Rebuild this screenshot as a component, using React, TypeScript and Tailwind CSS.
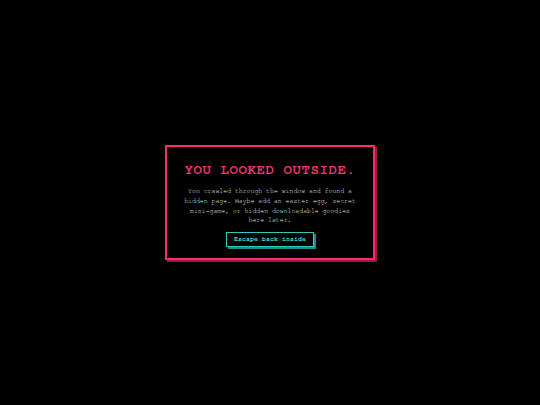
export default function App() {
  return (
    <div className="flex h-screen w-full items-center justify-center bg-black font-['FreeMono','Liberation_Mono',monospace]">
      <div className="flex w-[210px] flex-col items-center border-2 border-[#ff2d6f] bg-black px-[12px] pb-[11px] pt-[15px] text-center shadow-[2px_2px_0_#a0184a]">
        <h1 className="whitespace-nowrap text-[14px] font-bold leading-[16px] tracking-[0.6px] text-[#f2346f]">
          YOU LOOKED OUTSIDE.
        </h1>
        <p className="mt-[9px] w-[176px] text-[6.5px] leading-[9.6px] text-[#e6e6e6]">
          You crawled through the window and found a hidden page. Maybe add an easter egg, secret
          mini-game, or hidden downloadable goodies here later.
        </p>
        <button className="mt-[6px] border border-[#2ec9c0] bg-black px-[7px] py-[3px] text-[6.7px] font-bold leading-[7px] text-[#3fd6cc] shadow-[2px_2px_0_#1f8f8a]">
          Escape back inside
        </button>
      </div>
    </div>
  );
}
